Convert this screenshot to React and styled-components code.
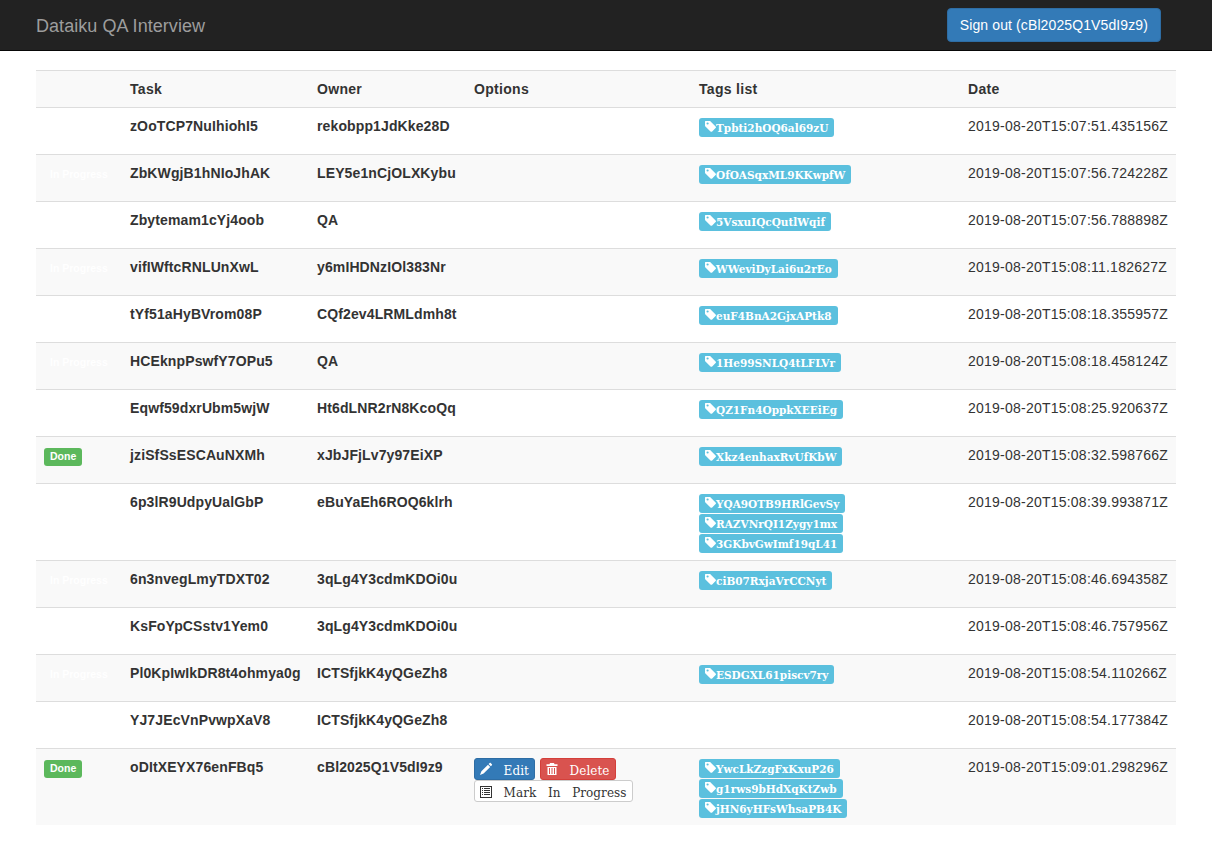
import styled, { createGlobalStyle } from "styled-components";

const tasks = [
  { status: "", task: "zOoTCP7NuIhiohI5", owner: "rekobpp1JdKke28D", tags: ["Tpbti2hOQ6al69zU"], date: "2019-08-20T15:07:51.435156Z" },
  { status: "In Progress", task: "ZbKWgjB1hNIoJhAK", owner: "LEY5e1nCjOLXKybu", tags: ["OfOASqxML9KKwpfW"], date: "2019-08-20T15:07:56.724228Z" },
  { status: "", task: "Zbytemam1cYj4oob", owner: "QA", tags: ["5VsxuIQcQutlWqif"], date: "2019-08-20T15:07:56.788898Z" },
  { status: "In Progress", task: "vifIWftcRNLUnXwL", owner: "y6mIHDNzIOl383Nr", tags: ["WWeviDyLai6u2rEo"], date: "2019-08-20T15:08:11.182627Z" },
  { status: "", task: "tYf51aHyBVrom08P", owner: "CQf2ev4LRMLdmh8t", tags: ["euF4BnA2GjxAPtk8"], date: "2019-08-20T15:08:18.355957Z" },
  { status: "In Progress", task: "HCEknpPswfY7OPu5", owner: "QA", tags: ["1He99SNLQ4tLFLVr"], date: "2019-08-20T15:08:18.458124Z" },
  { status: "", task: "Eqwf59dxrUbm5wjW", owner: "Ht6dLNR2rN8KcoQq", tags: ["QZ1Fn4OppkXEEiEg"], date: "2019-08-20T15:08:25.920637Z" },
  { status: "Done", task: "jziSfSsESCAuNXMh", owner: "xJbJFjLv7y97EiXP", tags: ["Xkz4enhaxRvUfKbW"], date: "2019-08-20T15:08:32.598766Z" },
  { status: "", task: "6p3lR9UdpyUalGbP", owner: "eBuYaEh6ROQ6klrh", tags: ["YQA9OTB9HRlGevSy", "RAZVNrQI1Zygy1mx", "3GKbvGwImf19qL41"], date: "2019-08-20T15:08:39.993871Z" },
  { status: "In Progress", task: "6n3nvegLmyTDXT02", owner: "3qLg4Y3cdmKDOi0u", tags: ["ciB07RxjaVrCCNyt"], date: "2019-08-20T15:08:46.694358Z" },
  { status: "", task: "KsFoYpCSstv1Yem0", owner: "3qLg4Y3cdmKDOi0u", tags: [], date: "2019-08-20T15:08:46.757956Z" },
  { status: "In Progress", task: "Pl0KpIwIkDR8t4ohmya0g", owner: "ICTSfjkK4yQGeZh8", tags: ["ESDGXL61piscv7ry"], date: "2019-08-20T15:08:54.110266Z" },
  { status: "", task: "YJ7JEcVnPvwpXaV8", owner: "ICTSfjkK4yQGeZh8", tags: [], date: "2019-08-20T15:08:54.177384Z" },
  { status: "Done", task: "oDItXEYX76enFBq5", owner: "cBl2025Q1V5dI9z9", tags: ["YwcLkZzgFxKxuP26", "g1rws9bHdXqKtZwb", "jHN6yHFsWhsaPB4K"], date: "2019-08-20T15:09:01.298296Z", mine: true },
];

const GlobalStyle = createGlobalStyle`
  html, body {
    margin: 0;
    background: #fff;
  }
  body {
    font-family: "Liberation Sans", Arial, sans-serif;
    font-size: 14px;
    line-height: 20px;
    color: #333;
  }
  #root {
    width: 1212px;
  }
`;

const Navbar = styled.nav`
  display: flex;
  align-items: flex-start;
  justify-content: space-between;
  height: 50px;
  padding: 0 51px 0 36px;
  background: #222;
  border-bottom: 1px solid #080808;
  margin-bottom: 19px;
`;

const Brand = styled.a`
  font-size: 18px;
  line-height: 20px;
  letter-spacing: 0.05px;
  padding: 16px 0 14px;
  color: #9d9d9d;
`;

const SignOut = styled.button`
  font-family: inherit;
  font-size: 14px;
  line-height: 20px;
  letter-spacing: 0.11px;
  margin-top: 8px;
  padding: 6px 12px;
  color: #fff;
  background: #337ab7;
  border: 1px solid #2e6da4;
  border-radius: 4px;
`;

const Content = styled.main`
  padding: 0 36px;
`;

const Table = styled.table`
  width: 1140px;
  table-layout: fixed;
  border-collapse: separate;
  border-spacing: 0;
`;

const Th = styled.th`
  box-sizing: border-box;
  width: ${(p) => p.$width}px;
  padding: 8px;
  text-align: left;
  font-weight: bold;
  letter-spacing: 0.3px;
  border-top: 1px solid #ddd;
  background: #f9f9f9;
`;

const Row = styled.tr`
  background: ${(p) => (p.$striped ? "#f9f9f9" : "#fff")};
`;

const Td = styled.td`
  padding: 8px;
  vertical-align: top;
  border-top: 1px solid #ddd;
  white-space: nowrap;
`;

const CellText = styled.p`
  margin: 0 0 10px;
  letter-spacing: ${(p) => (p.$bold ? "0.12px" : "0.23px")};
  font-weight: ${(p) => (p.$bold ? "bold" : "normal")};
`;

const Status = styled.span`
  display: inline-block;
  height: 18px;
  padding: 0 6px;
  margin-top: 3px;
  font-size: 10.5px;
  font-weight: bold;
  line-height: 17px;
  color: #fff;
  vertical-align: top;
  border-radius: 3px;
  background: ${(p) => (p.$done ? "#5cb85c" : "transparent")};
`;

const Actions = styled.div`
  display: flex;
  flex-wrap: wrap;
  column-gap: 4.6px;
  width: 209px;
  margin-top: 1px;
`;

const ActionButton = styled.button`
  display: inline-flex;
  align-items: center;
  height: 22px;
  padding: 0 5.4px 0 5px;
  font-family: "DejaVu Serif", serif;
  font-size: 12px;
  line-height: 18px;
  letter-spacing: 0.06px;
  white-space: pre;
  border-radius: 3px;
  color: ${(p) => p.$color};
  background: ${(p) => p.$bg};
  border: 1px solid ${(p) => p.$border};
`;

const ButtonLabel = styled.span`
  padding-top: 4px;
`;

const TagList = styled.div`
  display: flex;
  flex-direction: column;
  align-items: flex-start;
  row-gap: 1px;
  padding-top: 2px;
  margin-bottom: -1px;
`;

const Tag = styled.span`
  display: inline-flex;
  align-items: center;
  height: 19px;
  padding: 0 6px;
  font-family: "DejaVu Serif", serif;
  font-size: 10.5px;
  font-weight: bold;
  color: #fff;
  background: #5bc0de;
  border-radius: 3px;
`;

const Glyph = styled.svg`
  flex: none;
  width: ${(p) => p.$size}px;
  height: ${(p) => p.$size}px;
  fill: currentColor;
  overflow: visible;
  margin-top: ${(p) => p.$top || 0}px;
`;

const TagIcon = () => (
  <Glyph $size={11} $top={-3} viewBox="0 0 11 11">
    <path fillRule="evenodd" d="M.6 0h4c.4 0 .7.1 1 .4l5 5c.5.5.5 1.2 0 1.7L7.2 10.4c-.5.5-1.2.5-1.7 0L.4 5.4C.1 5.1 0 4.8 0 4.4V.6C0 .3.3 0 .6 0zM2.6 1.4a1.1 1.1 0 1 0 0 2.2 1.1 1.1 0 0 0 0-2.2z" />
  </Glyph>
);

const PencilIcon = () => (
  <Glyph $size={12} viewBox="0 0 12 12">
    <path d="M9.7 0c.3-.3.7-.3 1 0l1.2 1.2c.3.3.3.7 0 1L10.8 3.3 8.6 1.1 9.7 0zM8 1.7l2.2 2.2-6.6 6.6L0 12l1.4-3.7L8 1.7z" />
  </Glyph>
);

const TrashIcon = () => (
  <Glyph $size={12} viewBox="0 0 12 12">
    <path fillRule="evenodd" d="M4 0h4l.5 1.2h3V3H.5V1.2h3L4 0zM1.5 4h9v8h-9V4zM3 5v6h1V5H3zm2.5 0v6h1V5h-1zM8 5v6h1V5H8z" />
  </Glyph>
);

const ListIcon = () => (
  <Glyph $size={12} $top={2} viewBox="0 0 12 12">
    <path fillRule="evenodd" d="M0 0h12v12H0V0zm1 1v10h10V1H1zM2 2h1v1H2V2zm2 0h6v1H4V2zM2 4h1v1H2V4zm2 0h6v1H4V4zM2 6h1v1H2V6zm2 0h6v1H4V6zM2 8h1v1H2V8zm2 0h6v1H4V8z" />
  </Glyph>
);

function App() {
  return (
    <>
      <GlobalStyle />
      <Navbar>
        <Brand>Dataiku QA Interview</Brand>
        <SignOut>Sign out (cBl2025Q1V5dI9z9)</SignOut>
      </Navbar>
      <Content>
        <Table>
          <thead>
            <tr>
              <Th $width={86}></Th>
              <Th $width={187}>Task</Th>
              <Th $width={157}>Owner</Th>
              <Th $width={225}>Options</Th>
              <Th $width={269}>Tags list</Th>
              <Th $width={216}>Date</Th>
            </tr>
          </thead>
          <tbody>
            {tasks.map((item, index) => (
              <Row key={item.task} $striped={index % 2 === 1}>
                <Td>
                  {item.status && <Status $done={item.status === "Done"}>{item.status}</Status>}
                </Td>
                <Td>
                  <CellText $bold>{item.task}</CellText>
                </Td>
                <Td>
                  <CellText $bold>{item.owner}</CellText>
                </Td>
                <Td>
                  {item.mine && (
                    <Actions>
                      <ActionButton $color="#fff" $bg="#337ab7" $border="#2e6da4">
                        <PencilIcon />
                        <ButtonLabel>{"   Edit"}</ButtonLabel>
                      </ActionButton>
                      <ActionButton $color="#fff" $bg="#d9534f" $border="#d43f3a">
                        <TrashIcon />
                        <ButtonLabel>{"   Delete"}</ButtonLabel>
                      </ActionButton>
                      <ActionButton $color="#333" $bg="#fff" $border="#ccc">
                        <ListIcon />
                        <ButtonLabel>{"   Mark   In   Progress"}</ButtonLabel>
                      </ActionButton>
                    </Actions>
                  )}
                </Td>
                <Td>
                  <TagList>
                    {item.tags.map((tag) => (
                      <Tag key={tag}>
                        <TagIcon />
                        {tag}
                      </Tag>
                    ))}
                  </TagList>
                </Td>
                <Td>
                  <CellText>{item.date}</CellText>
                </Td>
              </Row>
            ))}
          </tbody>
        </Table>
      </Content>
    </>
  );
}

export default App;
